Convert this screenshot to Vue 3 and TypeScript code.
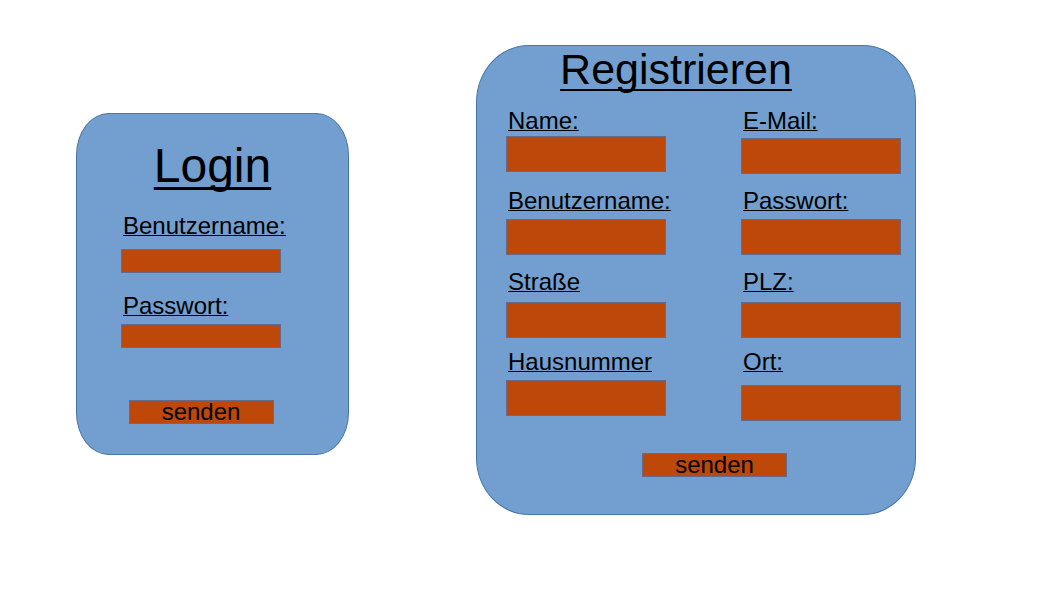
<script setup lang="ts">
import { reactive } from 'vue'

interface Field {
  id: string
  label: string
  type: string
  gap: 'none' | 'tight' | 'normal' | 'wide' | 'loose'
}

const loginFields: Field[] = [
  { id: 'login-user', label: 'Benutzername:', type: 'text', gap: 'loose' },
  { id: 'login-password', label: 'Passwort:', type: 'password', gap: 'normal' },
]

const registerFields: Field[] = [
  { id: 'name', label: 'Name:', type: 'text', gap: 'none' },
  { id: 'email', label: 'E-Mail:', type: 'email', gap: 'tight' },
  { id: 'user', label: 'Benutzername:', type: 'text', gap: 'normal' },
  { id: 'password', label: 'Passwort:', type: 'password', gap: 'normal' },
  { id: 'street', label: 'Straße', type: 'text', gap: 'wide' },
  { id: 'zip', label: 'PLZ:', type: 'text', gap: 'wide' },
  { id: 'house-number', label: 'Hausnummer', type: 'text', gap: 'normal' },
  { id: 'city', label: 'Ort:', type: 'text', gap: 'loose' },
]

const values = reactive<Record<string, string>>({})
</script>

<template>
  <main class="page">
    <section class="card login">
      <h1 class="title">Login</h1>
      <form class="form" @submit.prevent>
        <div class="fields">
          <div v-for="f in loginFields" :key="f.id" class="field" :class="f.gap">
            <label :for="f.id">{{ f.label }}</label>
            <input :id="f.id" v-model="values[f.id]" :type="f.type" />
          </div>
        </div>
        <button type="submit">senden</button>
      </form>
    </section>

    <section class="card register">
      <h1 class="title">Registrieren</h1>
      <form class="form" @submit.prevent>
        <div class="fields">
          <div v-for="f in registerFields" :key="f.id" class="field" :class="f.gap">
            <label :for="f.id">{{ f.label }}</label>
            <input :id="f.id" v-model="values[f.id]" :type="f.type" />
          </div>
        </div>
        <button type="submit">senden</button>
      </form>
    </section>
  </main>
</template>

<style>
body {
  margin: 0;
  background: #ffffff;
}
</style>

<style scoped>
.page {
  display: grid;
  grid-template-columns: 273fr 440fr;
  column-gap: 127px;
  align-items: start;
  padding: 45px 142px 45px 76px;
  font-family: "Liberation Sans", Arial, sans-serif;
  font-size: 24px;
  line-height: 28px;
  color: #000000;
}

.card {
  box-sizing: border-box;
  min-width: 0;
  background: #729fcf;
  border: 1px solid #4876a4;
}

.login {
  margin-top: 68px;
  padding: 25px 0 30px;
  border-radius: 33px / 42px;
}

.register {
  padding: 0 0 37px;
  border-radius: 53px / 57px;
}

.title {
  margin: 0;
  font-weight: 400;
  text-align: center;
  text-decoration-line: underline;
  text-decoration-skip-ink: none;
}

.login .title {
  font-size: 48px;
  line-height: 54px;
  text-decoration-thickness: 3px;
  text-underline-offset: 5px;
}

.register .title {
  padding-right: 40px;
  font-size: 43px;
  line-height: 46px;
  text-decoration-thickness: 2px;
  text-underline-offset: 5px;
}

.form {
  display: flex;
  flex-direction: column;
  align-items: center;
}

.login .form {
  padding: 19px 67px 0 44px;
}

.register .form {
  padding: 15px 14px 0 29px;
}

.fields {
  display: grid;
  width: 100%;
}

.login .fields {
  grid-template-rows: 80px auto;
  margin-bottom: 52px;
}

.register .fields {
  grid-template-columns: 1fr 1fr;
  grid-template-rows: 80px 81px 80px auto;
  column-gap: 75px;
  margin-bottom: 32px;
}

.field {
  display: flex;
  flex-direction: column;
  min-width: 0;
}

label {
  padding-left: 2px;
  white-space: nowrap;
  text-decoration: underline 1px;
  text-decoration-skip-ink: none;
}

input,
button {
  box-sizing: border-box;
  margin: 0;
  border: 1px solid #626b8e;
  border-radius: 0;
  background: #be480a;
  color: #000000;
  font: inherit;
}

input {
  width: 100%;
  height: 36px;
  padding: 0 6px;
}

.login input {
  height: 24px;
}

.none input {
  margin-top: 1px;
}

.tight input {
  margin-top: 3px;
}

.normal input {
  margin-top: 4px;
}

.wide input {
  margin-top: 6px;
}

.loose input {
  margin-top: 9px;
}

button {
  width: 145px;
  height: 24px;
  padding: 0;
  line-height: 20px;
}

.register button {
  margin-left: 22px;
}
</style>
